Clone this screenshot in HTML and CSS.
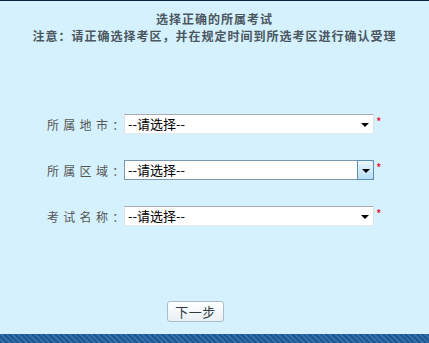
FILE: index.html
```html
<!DOCTYPE html>
<html lang="zh-CN">
<head>
<meta charset="utf-8">
<title>选择正确的所属考试</title>
<link rel="stylesheet" href="styles.css">
</head>
<body>
<div class="page">
  <div class="header">
    <div class="title">选择正确的所属考试</div>
    <div class="notice">注意：请正确选择考区，并在规定时间到所选考区进行确认受理</div>
  </div>
  <div class="form">
    <div class="row">
      <span class="label">所属地市：</span>
      <div class="select"><span class="value">--请选择--</span><span class="arrow"><i class="tri"></i></span></div>
      <span class="req">*</span>
    </div>
    <div class="row">
      <span class="label">所属区域：</span>
      <div class="select focus"><span class="value">--请选择--</span><span class="arrow"><i class="tri"></i></span></div>
      <span class="req">*</span>
    </div>
    <div class="row">
      <span class="label">考试名称：</span>
      <div class="select"><span class="value">--请选择--</span><span class="arrow"><i class="tri"></i></span></div>
      <span class="req">*</span>
    </div>
    <div class="actions">
      <button class="btn" type="button">下一步</button>
    </div>
  </div>
  <div class="stripe"></div>
</div>
</body>
</html>
```
FILE: styles.css
```css
html, body {
  margin: 0;
  padding: 0;
  background: #d5f1fd;
}
.page {
  height: 343px;
  box-sizing: border-box;
  border-top: 1px solid #0b2340;
  display: flex;
  flex-direction: column;
  font-family: "Noto Sans CJK SC", "Liberation Sans", sans-serif;
}
.header {
  padding-top: 9px;
  text-align: center;
  font-weight: bold;
  font-size: 12px;
  letter-spacing: 1px;
  line-height: 17px;
  color: #4b5660;
}
.form {
  flex: 1;
  margin-top: 70px;
  padding-left: 47px;
  display: flex;
  flex-direction: column;
  gap: 26px;
}
.row {
  display: flex;
  align-items: center;
  height: 20px;
}
.label {
  width: 77px;
  font-size: 12px;
  letter-spacing: 4.3px;
  color: #555;
  white-space: nowrap;
}
.select {
  width: 250px;
  height: 20px;
  box-sizing: border-box;
  display: flex;
  align-items: stretch;
  background: #fff;
  border: 1px solid;
  border-color: #a9abb0 #e2e3ea #e6eaef #dbdfe6;
}
.value {
  flex: 1;
  padding-left: 3px;
  font-size: 13px;
  line-height: 18px;
  color: #000;
}
.arrow {
  width: 17px;
  display: flex;
  align-items: center;
  justify-content: center;
  padding-top: 2px;
  box-sizing: border-box;
}
.tri {
  width: 0;
  height: 0;
  border-left: 4px solid transparent;
  border-right: 4px solid transparent;
  border-top: 4px solid #000;
}
.select.focus {
  border-color: #7b98ae;
}
.select.focus .arrow {
  border: 1px solid #5f8fb4;
  margin: -1px -1px -1px 0;
  width: 17px;
  background: linear-gradient(#eaf6fd, #b6def5);
  border-radius: 0 2px 2px 0;
}
.req {
  margin-left: 2px;
  align-self: flex-start;
  padding-top: 1px;
  font-size: 12px;
  line-height: 14px;
  color: #e8001c;
}
.actions {
  margin-top: 46px;
  padding-left: 120px;
}
.btn {
  width: 57px;
  height: 21px;
  padding: 0;
  border: 1px solid #a9bccb;
  border-radius: 3px;
  background: linear-gradient(#ffffff, #eaf0f5);
  font-family: "Noto Sans CJK SC", sans-serif;
  font-size: 13px;
  letter-spacing: 0.5px;
  color: #2f3b45;
}
.stripe {
  height: 9px;
  background: repeating-linear-gradient(45deg, #1e5790 0, #1e5790 2px, #3170ad 2px, #3170ad 4px);
}
```
